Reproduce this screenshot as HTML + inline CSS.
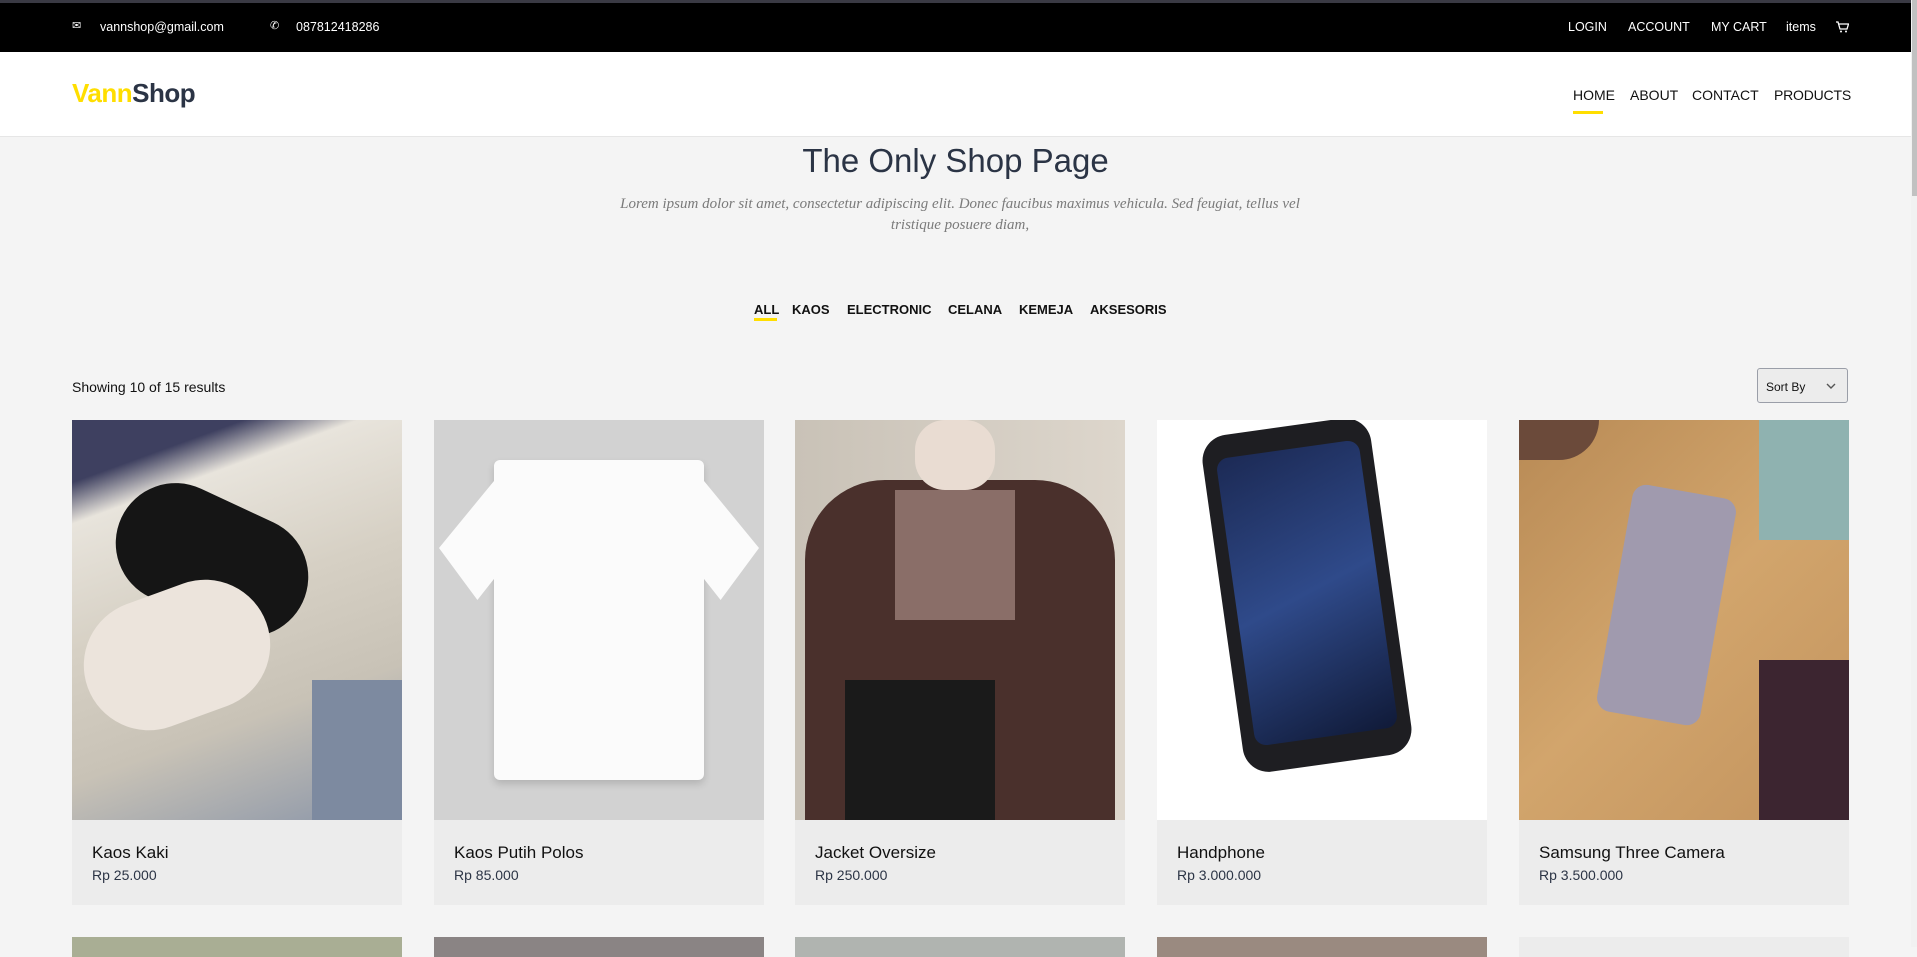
<!DOCTYPE html>
<html><head><meta charset="utf-8"><style>
*{margin:0;padding:0;box-sizing:border-box}
body{width:1917px;height:947px;overflow:hidden;background:#f4f4f4;font-family:"Liberation Sans",sans-serif;position:relative;color:#000}
.a{position:absolute}
.top{left:0;top:0;width:1911px;height:52px;background:#000;border-top:3px solid #3a3a44}
.top span{position:absolute;color:#fff;font-size:12.5px;top:17px}
.hdr{left:0;top:52px;width:1911px;height:85px;background:#fff;border-bottom:1px solid #e6e6e6}
.nav{position:absolute;top:35px;font-size:14px;color:#111}
.flt{position:absolute;top:302px;font-size:13px;font-weight:bold;color:#111}
.card{position:absolute;top:420px;width:330px;height:485px;background:#ececec}
.img{width:330px;height:400px;overflow:hidden;position:relative}
.nm{position:absolute;left:20px;top:423px;font-size:17px;color:#111}
.pr{position:absolute;left:20px;top:447px;font-size:14px;color:#2b3445}
.row2{position:absolute;top:937px;width:330px;height:20px}
</style></head><body>
<div class="a top">
<span style="left:72px;top:16px;font-size:11px">&#9993;</span>
<span style="left:100px">vannshop@gmail.com</span>
<span style="left:270px;top:16px;font-size:11px">&#9990;</span>
<span style="left:296px">087812418286</span>
<span style="left:1568px">LOGIN</span>
<span style="left:1628px">ACCOUNT</span>
<span style="left:1711px">MY CART</span>
<span style="left:1786px">items</span>
<svg class="a" style="left:1836px;top:18px" width="13" height="12" viewBox="0 0 13 12"><path d="M0 1h2l2 7h7l1.5-5H3" fill="none" stroke="#fff" stroke-width="1.3"/><circle cx="5" cy="10.5" r="1" fill="#fff"/><circle cx="10" cy="10.5" r="1" fill="#fff"/></svg>
</div>
<div class="a hdr">
<div class="a" style="left:72px;top:26px;font-size:26px;font-weight:bold;letter-spacing:-0.5px"><span style="color:#ffde00">Vann</span><span style="color:#2b3445">Shop</span></div>
<span class="nav" style="left:1573px">HOME</span>
<div class="a" style="left:1573px;top:59px;width:30px;height:3px;background:#ffde00"></div>
<span class="nav" style="left:1630px">ABOUT</span>
<span class="nav" style="left:1692px">CONTACT</span>
<span class="nav" style="left:1774px;letter-spacing:-0.2px">PRODUCTS</span>
</div>
<div class="a" style="left:0;width:1911px;top:142px;text-align:center;font-size:33px;color:#2b3445">The Only Shop Page</div>
<div class="a" style="left:595px;width:730px;top:194px;text-align:center;font-family:'Liberation Serif',serif;font-style:italic;font-size:15px;line-height:21px;color:#7a7a7a">Lorem ipsum dolor sit amet, consectetur adipiscing elit. Donec faucibus maximus vehicula. Sed feugiat, tellus vel tristique posuere diam,</div>
<span class="flt" style="left:754px">ALL</span>
<div class="a" style="left:754px;top:318px;width:23px;height:3px;background:#ffde00"></div>
<span class="flt" style="left:792px">KAOS</span>
<span class="flt" style="left:847px">ELECTRONIC</span>
<span class="flt" style="left:948px">CELANA</span>
<span class="flt" style="left:1019px">KEMEJA</span>
<span class="flt" style="left:1090px">AKSESORIS</span>
<div class="a" style="left:72px;top:379px;font-size:14px;color:#111">Showing 10 of 15 results</div>
<div class="a" style="left:1757px;top:368px;width:91px;height:35px;border:1px solid #9a9ea8;border-radius:3px;background:#ececec;font-size:12px;padding:11px 0 0 8px;color:#111">Sort By<svg class="a" style="left:68px;top:14px" width="10" height="6" viewBox="0 0 10 6"><path d="M1 1l4 4 4-4" fill="none" stroke="#555" stroke-width="1.4"/></svg></div>

<div class="card" style="left:72px"><div class="img" style="background:linear-gradient(160deg,#3e4060 0%,#3e4060 12%,#e8e4dc 20%,#d6d0c4 45%,#c8c2b6 70%,#8a95a8 100%)">
<div class="a" style="left:40px;top:80px;width:200px;height:120px;background:#151515;border-radius:60px;transform:rotate(25deg)"></div>
<div class="a" style="left:10px;top:170px;width:190px;height:130px;background:#ece4dc;border-radius:70px;transform:rotate(-20deg)"></div>
<div class="a" style="left:240px;top:260px;width:100px;height:140px;background:#7d8aa0"></div></div>
<div class="nm">Kaos Kaki</div><div class="pr">Rp 25.000</div></div>

<div class="card" style="left:434px"><div class="img" style="background:#d2d2d2">
<div class="a" style="left:60px;top:40px;width:210px;height:320px;background:#fbfbfb;border-radius:6px;box-shadow:0 4px 8px rgba(0,0,0,.15)"></div>
<div class="a" style="left:5px;top:50px;width:320px;height:130px;background:#fbfbfb;clip-path:polygon(20% 0,80% 0,100% 60%,88% 100%,72% 50%,28% 50%,12% 100%,0 60%)"></div></div>
<div class="nm">Kaos Putih Polos</div><div class="pr">Rp 85.000</div></div>

<div class="card" style="left:795px"><div class="img" style="background:linear-gradient(90deg,#c9c2b7,#ddd6cc)">
<div class="a" style="left:10px;top:60px;width:310px;height:340px;background:#4a302c;border-radius:80px 80px 0 0"></div>
<div class="a" style="left:100px;top:70px;width:120px;height:130px;background:#8a6e68"></div>
<div class="a" style="left:50px;top:260px;width:150px;height:140px;background:#1a1a1a"></div>
<div class="a" style="left:120px;top:0;width:80px;height:70px;background:#e9dcd2;border-radius:30px"></div></div>
<div class="nm">Jacket Oversize</div><div class="pr">Rp 250.000</div></div>

<div class="card" style="left:1157px"><div class="img" style="background:#fff">
<div class="a" style="left:65px;top:5px;width:170px;height:340px;background:#1e1e22;border-radius:26px;transform:rotate(-8deg)"></div>
<div class="a" style="left:78px;top:28px;width:144px;height:290px;background:linear-gradient(160deg,#1c2a55,#2f4a8a,#101a38);border-radius:12px;transform:rotate(-8deg)"></div></div>
<div class="nm">Handphone</div><div class="pr">Rp 3.000.000</div></div>

<div class="card" style="left:1519px"><div class="img" style="background:linear-gradient(135deg,#b88a55,#d2a56c 50%,#c2935e)">
<div class="a" style="left:95px;top:70px;width:105px;height:230px;background:#a09aae;border-radius:14px;transform:rotate(10deg)"></div>
<div class="a" style="left:240px;top:0;width:90px;height:120px;background:#8fb2b0"></div>
<div class="a" style="left:240px;top:240px;width:90px;height:160px;background:#3c2530"></div>
<div class="a" style="left:0;top:0;width:80px;height:40px;background:#6b4a3a;border-radius:0 0 40px 0"></div></div>
<div class="nm">Samsung Three Camera</div><div class="pr">Rp 3.500.000</div></div>

<div class="row2" style="left:72px;background:#a9ae94"></div>
<div class="row2" style="left:434px;background:#8a8484"></div>
<div class="row2" style="left:795px;background:#b0b4b0"></div>
<div class="row2" style="left:1157px;background:#9a8a80"></div>
<div class="row2" style="left:1519px;background:#ececec"></div>
<div class="a" style="left:1911px;top:0;width:6px;height:947px;background:#f1f1f1"></div>
<div class="a" style="left:1912px;top:0;width:5px;height:196px;background:#c1c1c1"></div>
</body></html>
